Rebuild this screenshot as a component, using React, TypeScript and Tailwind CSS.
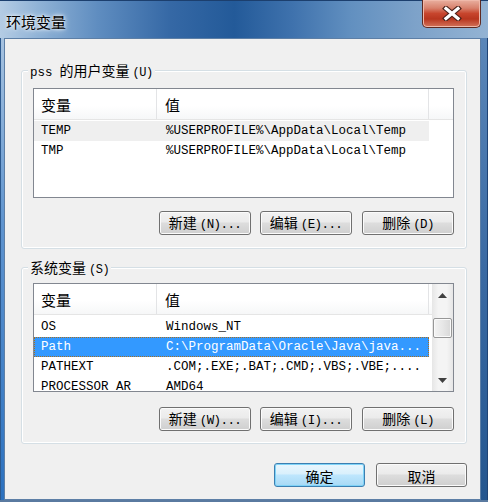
import React from "react";

const CJK = "[font-family:'Noto_Sans_CJK_SC',sans-serif]";
const MONO = "[font-family:'Liberation_Mono',monospace]";

function WinButton({
  label,
  hot,
  width,
  def,
  className = "",
}: {
  label: string;
  hot?: string;
  width: string;
  def?: boolean;
  className?: string;
}) {
  return (
    <div
      className={
        "h-[24px] rounded-[3px] border flex items-center justify-center " +
        width +
        " " +
        (def
          ? "border-[#3c7fb1] bg-[linear-gradient(#eaf6fd_0%,#d9f0fc_45%,#bee6fd_50%,#a7d9f5_100%)] shadow-[inset_0_0_0_1px_#7fd3f7]"
          : "border-[#707070] bg-[linear-gradient(#f2f2f2_0%,#ebebeb_45%,#dddddd_50%,#cfcfcf_100%)] shadow-[inset_0_0_0_1px_#fbfbfb]") +
        " " +
        className
      }
    >
      <span className="flex items-baseline mt-[1px]">
        <span className={CJK + " text-[14px] leading-[16px] text-black"}>{label}</span>
        {hot && (
          <span className={MONO + " text-[12.5px] tracking-[-0.6px] leading-[16px] text-black ml-[3px]"}>{hot}</span>
        )}
      </span>
    </div>
  );
}

function Header() {
  return (
    <div className="h-[31px] flex bg-[linear-gradient(#ffffff_0%,#ffffff_55%,#f6f7f8_100%)] border-b border-[#e5e5e5]">
      <div className={"w-[123px] border-r border-[#e3e4e6] flex items-center pl-[7px] pt-[2px] text-[15px] text-black " + CJK}>
        变量
      </div>
      <div className={"w-[272px] border-r border-[#e3e4e6] flex items-center pl-[8px] pt-[2px] text-[15px] text-black " + CJK}>
        值
      </div>
      <div className="flex-1" />
    </div>
  );
}

function Row({
  name,
  value,
  variant,
}: {
  name: string;
  value: string;
  variant?: "hover" | "sel";
}) {
  const bg =
    variant === "sel"
      ? "bg-[#3399ff] text-white outline outline-1 outline-dotted outline-[#a86f1f] -outline-offset-1"
      : variant === "hover"
      ? "bg-[#efefef] text-black"
      : "text-black";
  return (
    <div className={"h-[20px] w-[395px] flex items-center " + bg}>
      <div className={"w-[123px] pl-[7px] overflow-hidden whitespace-nowrap text-[12.5px] leading-[20px] " + MONO}>
        {name}
      </div>
      <div className={"w-[272px] pl-[9px] overflow-hidden whitespace-nowrap text-[12.5px] leading-[20px] " + MONO}>
        {value}
      </div>
    </div>
  );
}

function GroupLabel({ children }: { children: React.ReactNode }) {
  return (
    <div className="absolute left-[6px] top-[-9px] px-[2px] bg-[#f0f0f0] flex items-baseline h-[17px]">
      {children}
    </div>
  );
}

function Scrollbar() {
  return (
    <div className="w-[21px] flex flex-col bg-[linear-gradient(90deg,#e6e6e6,#f4f4f4_30%,#f4f4f4_70%,#e6e6e6)]">
      <div className="h-[22px] flex items-center justify-center">
        <svg width="9" height="5" viewBox="0 0 9 5">
          <path d="M0 5 L4.5 0 L9 5 Z" fill="#404040" />
        </svg>
      </div>
      <div className="h-[12px]" />
      <div className="h-[20px] mx-[1px] rounded-[2px] border border-[#979797] bg-[linear-gradient(90deg,#f3f3f3,#e7e7e7_50%,#d8d8d8)] shadow-[inset_0_0_0_1px_#fafafa]" />
      <div className="flex-1" />
      <div className="h-[22px] flex items-center justify-center">
        <svg width="9" height="5" viewBox="0 0 9 5">
          <path d="M0 0 L4.5 5 L9 0 Z" fill="#404040" />
        </svg>
      </div>
    </div>
  );
}

export default function App() {
  return (
    <div className="w-[488px] h-[502px] flex flex-col overflow-hidden bg-[#2a62a3]">
      {/* Title bar */}
      <div className="relative h-[38px] shrink-0 border-t border-[#1c3f6e] bg-[linear-gradient(90deg,#b4cce4_0%,#8fb2d6_8%,#5f8dc0_20%,#3568a5_35%,#235a99_48%,#3f72ad_60%,#6290c0_72%,#7da2c9_85%,#93b3d3_100%)] flex items-center pl-[6px]">
        <span className={"text-[15px] leading-none text-black mt-[3px] [text-shadow:0_0_6px_#ffffff,0_0_3px_#ffffff] " + CJK}>
          环境变量
        </span>
        <div className="absolute right-[7px] top-[-1px] w-[59px] h-[28px] rounded-b-[5px] border border-t-0 border-[#5e2a22] bg-[linear-gradient(#e9b0a0_0%,#d8816c_30%,#c7452d_50%,#b8361f_70%,#d3735a_100%)] shadow-[inset_0_0_0_1px_#efb9aa] flex items-center justify-center">
          <svg width="20" height="15" viewBox="0 0 20 15">
            <path d="M4 2.5 L16 12.5 M16 2.5 L4 12.5" stroke="#4a2018" strokeWidth="5.5" strokeLinecap="square" />
            <path d="M4 2.5 L16 12.5 M16 2.5 L4 12.5" stroke="#ffffff" strokeWidth="3.2" strokeLinecap="square" />
          </svg>
        </div>
      </div>

      <div className="flex flex-1 min-h-0">
        <div className="w-[4px] shrink-0 border-l border-[#2d5a8f] bg-[linear-gradient(#a7c3e0,#5f94cf_40%,#2c71bf)]" />
        <div className="w-[477px] shrink-0 border border-[#5d7fa6] bg-[#f0f0f0] flex flex-col">
          {/* Group 1 */}
          <div className="relative mt-[31px] ml-[16px] mr-[13px] border border-[#d5dfe5] rounded-[3px] shadow-[inset_0_0_0_1px_#ffffff] pt-[17px] pl-[11px] pr-[12px] pb-[13px]">
            <GroupLabel>
              <span className={MONO + " text-[12.5px] leading-[17px] text-black"}>pss</span>
              <span className={CJK + " text-[14px] leading-[17px] text-black ml-[7px]"}>的用户变量</span>
              <span className={MONO + " text-[12px] tracking-[-0.5px] leading-[17px] text-black ml-[3px]"}>(U)</span>
            </GroupLabel>
            <div className="h-[110px] border border-[#828790] bg-white overflow-hidden">
              <Header />
              <div className="pt-[1px]">
                <Row name="TEMP" value="%USERPROFILE%\AppData\Local\Temp" variant="hover" />
                <Row name="TMP" value="%USERPROFILE%\AppData\Local\Temp" />
              </div>
            </div>
            <div className="mt-[13px] flex justify-end">
              <WinButton label="新建" hot="(N)..." width="w-[92px]" />
              <WinButton label="编辑" hot="(E)..." width="w-[92px]" className="ml-[9px]" />
              <WinButton label="删除" hot="(D)" width="w-[92px]" className="ml-[10px]" />
            </div>
          </div>

          {/* Group 2 */}
          <div className="relative mt-[18px] ml-[16px] mr-[13px] border border-[#d5dfe5] rounded-[3px] shadow-[inset_0_0_0_1px_#ffffff] pt-[15px] pl-[11px] pr-[12px] pb-[12px]">
            <GroupLabel>
              <span className={CJK + " text-[14px] leading-[17px] text-black"}>系统变量</span>
              <span className={MONO + " text-[12px] tracking-[-0.5px] leading-[17px] text-black ml-[3px]"}>(S)</span>
            </GroupLabel>
            <div className="h-[109px] border border-[#828790] bg-white overflow-hidden flex">
              <div className="flex-1 min-w-0">
                <Header />
                <div className="pt-[2px]">
                  <Row name="OS" value="Windows_NT" />
                  <Row name="Path" value="C:\ProgramData\Oracle\Java\java..." variant="sel" />
                  <Row name="PATHEXT" value=".COM;.EXE;.BAT;.CMD;.VBS;.VBE;...." />
                  <Row name="PROCESSOR_AR" value="AMD64" />
                </div>
              </div>
              <Scrollbar />
            </div>
            <div className="mt-[15px] flex justify-end">
              <WinButton label="新建" hot="(W)..." width="w-[92px]" />
              <WinButton label="编辑" hot="(I)..." width="w-[92px]" className="ml-[9px]" />
              <WinButton label="删除" hot="(L)" width="w-[92px]" className="ml-[10px]" />
            </div>
          </div>

          {/* OK / Cancel */}
          <div className="mt-[19px] mr-[13px] flex justify-end">
            <WinButton label="确定" width="w-[91px]" def />
            <WinButton label="取消" width="w-[91px]" className="ml-[11px]" />
          </div>
        </div>
        <div className="w-[7px] shrink-0 border-r border-[#1f4475] bg-[linear-gradient(#5a86b8,#3a6aa3_50%,#24568f)]" />
      </div>
      <div className="h-[2px] shrink-0 bg-[#5a7aa0]" />
    </div>
  );
}
